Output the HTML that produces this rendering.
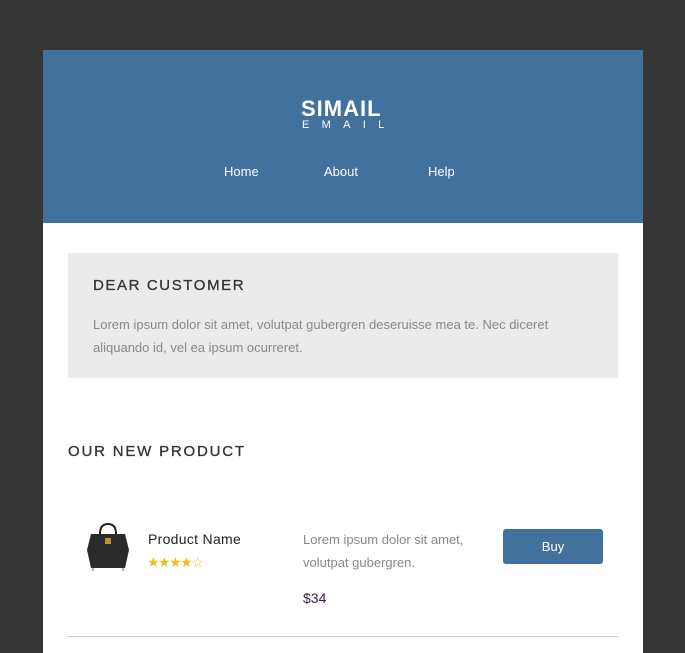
<!DOCTYPE html>
<html><head><style>
body{margin:0;background:#353535;width:685px;height:653px;overflow:hidden;font-family:"Liberation Sans",sans-serif;}
.wrap{position:absolute;left:43px;top:50px;width:600px;height:603px;background:#fff;}
.hdr{height:173px;background:#41719c;position:relative;color:#fff;}
.logo{position:absolute;left:258px;top:48px;font-weight:bold;font-size:22px;letter-spacing:1px;line-height:22px;}
.sub{position:absolute;left:259px;top:70px;font-size:11px;letter-spacing:12.3px;line-height:11px;}
.nav{position:absolute;top:114px;font-size:13px;}
.box{position:absolute;left:25px;top:203px;width:550px;height:125px;background:#ebebeb;}
.box h2{position:absolute;left:25px;top:24px;margin:0;font-size:15px;font-weight:normal;letter-spacing:1.6px;color:#333;-webkit-text-stroke:0.3px #333;}
.box p{position:absolute;left:25px;top:60px;margin:0;font-size:13px;line-height:23px;color:#888;width:490px;}
h3{position:absolute;left:25px;top:393px;margin:0;font-size:15px;font-weight:normal;letter-spacing:1.8px;color:#333;-webkit-text-stroke:0.3px #333;}
.t{position:absolute;color:#888;font-size:13px;line-height:23px;}
</style></head><body>
<div class="wrap">
<div class="hdr">
<div class="logo">SIMAIL</div>
<div class="sub">EMAIL</div>
<div class="nav" style="left:181px">Home</div>
<div class="nav" style="left:281px">About</div>
<div class="nav" style="left:385px">Help</div>
</div>
<div class="box"><h2>DEAR CUSTOMER</h2><p>Lorem ipsum dolor sit amet, volutpat gubergren deseruisse mea te. Nec diceret aliquando id, vel ea ipsum ocurreret.</p></div>
<h3>OUR NEW PRODUCT</h3>
<svg style="position:absolute;left:42px;top:472px" width="46" height="50" viewBox="0 0 46 50">
<path d="M15 12 Q15 2 23 2 Q31 2 31 12" fill="none" stroke="#222" stroke-width="2"/>
<path d="M6 12 H40 L44 28 L40 46 H6 L2 28 Z" fill="#2a2a2a"/>
<rect x="20" y="16" width="6" height="6" fill="#b8962e"/>
<path d="M8 46 v3 M38 46 v3" stroke="#999" stroke-width="1.5"/>
</svg>
<div style="position:absolute;left:105px;top:481px;font-size:14px;color:#222;letter-spacing:0.3px">Product Name</div>
<div style="position:absolute;left:104px;top:504px;font-size:14px;color:#e8c224;letter-spacing:-1.5px">★★★★☆</div>
<div class="t" style="left:260px;top:478px">Lorem ipsum dolor sit amet,<br>volutpat gubergren.</div>
<div style="position:absolute;left:260px;top:540px;font-size:14px;color:#3a1a4a">$34</div>
<div style="position:absolute;left:460px;top:479px;width:100px;height:35px;background:#41719c;border-radius:3px;color:#fff;font-size:13px;line-height:35px;text-align:center">Buy</div>
<div style="position:absolute;left:25px;top:586px;width:550px;height:1px;background:#ccc"></div>
</div>
</body></html>
